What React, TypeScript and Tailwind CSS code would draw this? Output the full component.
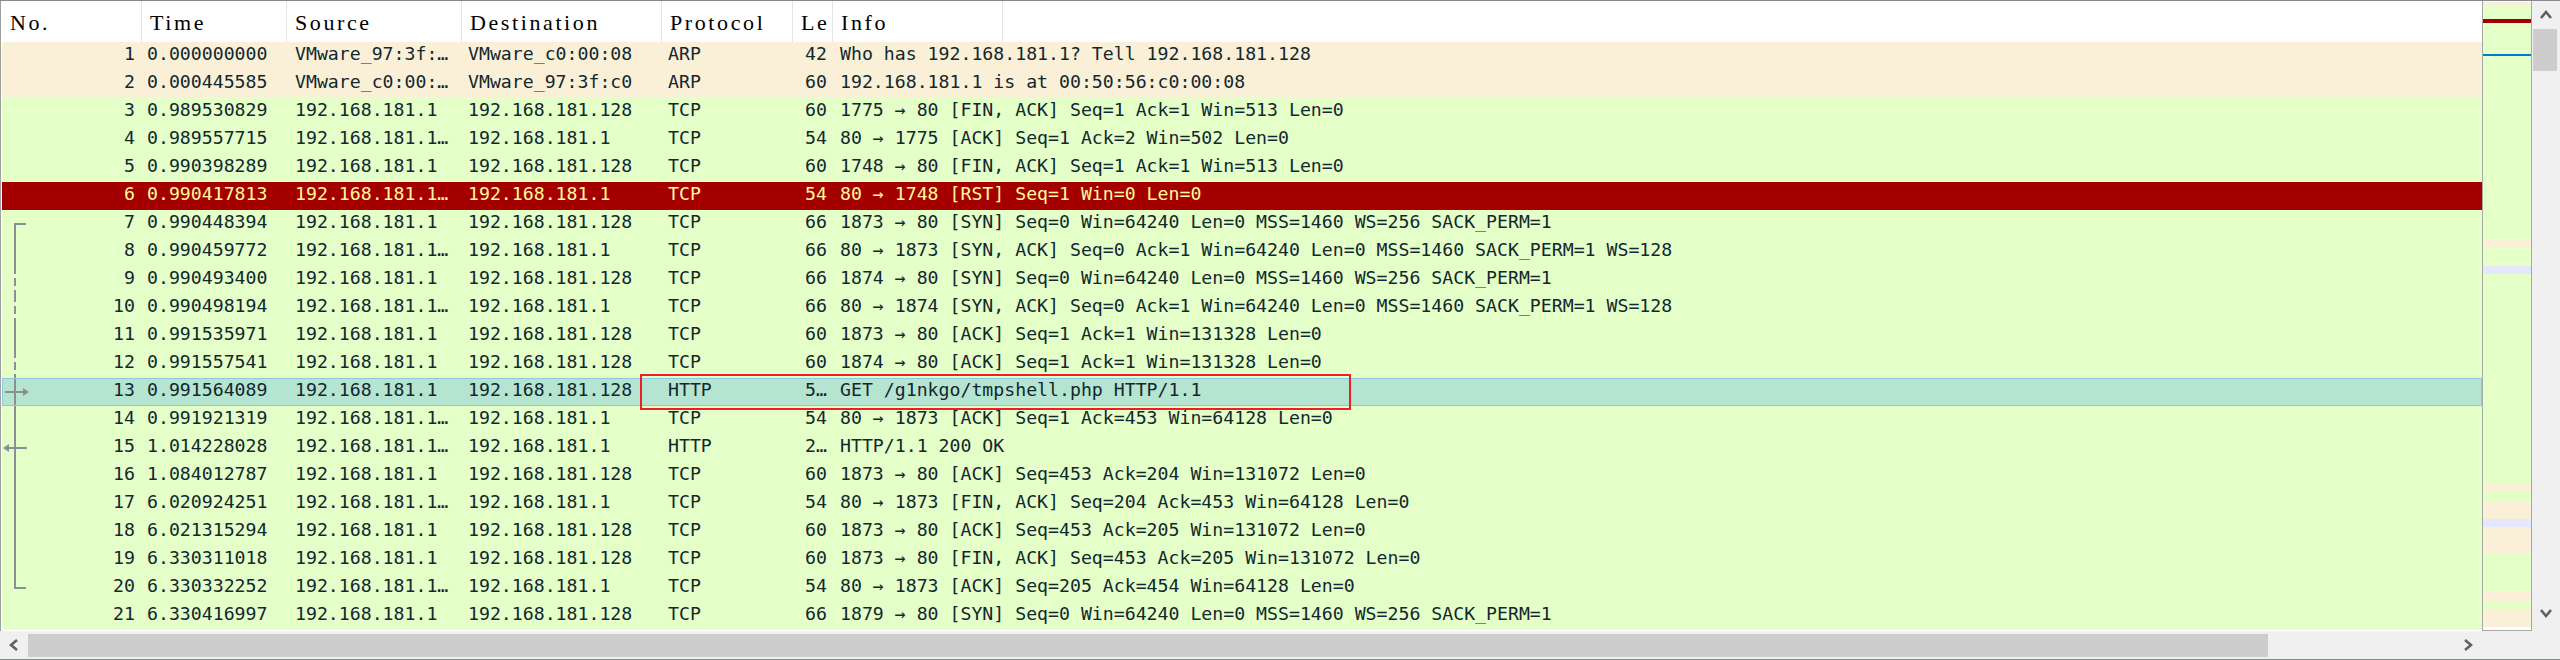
import React from 'react';

type Kind = 'arp' | 'tcp' | 'rst' | 'sel';
type Tree = 'none' | 'first' | 'solid' | 'dash' | 'last' | 'req' | 'resp';
interface Row {
  no: number;
  time: string;
  src: string;
  dst: string;
  proto: string;
  len: string;
  info: string;
  kind: Kind;
  tree: Tree;
}

const A = '192.168.181.1';
const B = '192.168.181.128';
const S = '192.168.181.1…';

const rows: Row[] = [
  { no: 1, time: '0.000000000', src: 'VMware_97:3f:…', dst: 'VMware_c0:00:08', proto: 'ARP', len: '42', info: 'Who has 192.168.181.1? Tell 192.168.181.128', kind: 'arp', tree: 'none' },
  { no: 2, time: '0.000445585', src: 'VMware_c0:00:…', dst: 'VMware_97:3f:c0', proto: 'ARP', len: '60', info: '192.168.181.1 is at 00:50:56:c0:00:08', kind: 'arp', tree: 'none' },
  { no: 3, time: '0.989530829', src: A, dst: B, proto: 'TCP', len: '60', info: '1775 → 80 [FIN, ACK] Seq=1 Ack=1 Win=513 Len=0', kind: 'tcp', tree: 'none' },
  { no: 4, time: '0.989557715', src: S, dst: A, proto: 'TCP', len: '54', info: '80 → 1775 [ACK] Seq=1 Ack=2 Win=502 Len=0', kind: 'tcp', tree: 'none' },
  { no: 5, time: '0.990398289', src: A, dst: B, proto: 'TCP', len: '60', info: '1748 → 80 [FIN, ACK] Seq=1 Ack=1 Win=513 Len=0', kind: 'tcp', tree: 'none' },
  { no: 6, time: '0.990417813', src: S, dst: A, proto: 'TCP', len: '54', info: '80 → 1748 [RST] Seq=1 Win=0 Len=0', kind: 'rst', tree: 'none' },
  { no: 7, time: '0.990448394', src: A, dst: B, proto: 'TCP', len: '66', info: '1873 → 80 [SYN] Seq=0 Win=64240 Len=0 MSS=1460 WS=256 SACK_PERM=1', kind: 'tcp', tree: 'first' },
  { no: 8, time: '0.990459772', src: S, dst: A, proto: 'TCP', len: '66', info: '80 → 1873 [SYN, ACK] Seq=0 Ack=1 Win=64240 Len=0 MSS=1460 SACK_PERM=1 WS=128', kind: 'tcp', tree: 'solid' },
  { no: 9, time: '0.990493400', src: A, dst: B, proto: 'TCP', len: '66', info: '1874 → 80 [SYN] Seq=0 Win=64240 Len=0 MSS=1460 WS=256 SACK_PERM=1', kind: 'tcp', tree: 'dash' },
  { no: 10, time: '0.990498194', src: S, dst: A, proto: 'TCP', len: '66', info: '80 → 1874 [SYN, ACK] Seq=0 Ack=1 Win=64240 Len=0 MSS=1460 SACK_PERM=1 WS=128', kind: 'tcp', tree: 'dash' },
  { no: 11, time: '0.991535971', src: A, dst: B, proto: 'TCP', len: '60', info: '1873 → 80 [ACK] Seq=1 Ack=1 Win=131328 Len=0', kind: 'tcp', tree: 'solid' },
  { no: 12, time: '0.991557541', src: A, dst: B, proto: 'TCP', len: '60', info: '1874 → 80 [ACK] Seq=1 Ack=1 Win=131328 Len=0', kind: 'tcp', tree: 'dash' },
  { no: 13, time: '0.991564089', src: A, dst: B, proto: 'HTTP', len: '5…', info: 'GET /g1nkgo/tmpshell.php HTTP/1.1', kind: 'sel', tree: 'req' },
  { no: 14, time: '0.991921319', src: S, dst: A, proto: 'TCP', len: '54', info: '80 → 1873 [ACK] Seq=1 Ack=453 Win=64128 Len=0', kind: 'tcp', tree: 'solid' },
  { no: 15, time: '1.014228028', src: S, dst: A, proto: 'HTTP', len: '2…', info: 'HTTP/1.1 200 OK', kind: 'tcp', tree: 'resp' },
  { no: 16, time: '1.084012787', src: A, dst: B, proto: 'TCP', len: '60', info: '1873 → 80 [ACK] Seq=453 Ack=204 Win=131072 Len=0', kind: 'tcp', tree: 'solid' },
  { no: 17, time: '6.020924251', src: S, dst: A, proto: 'TCP', len: '54', info: '80 → 1873 [FIN, ACK] Seq=204 Ack=453 Win=64128 Len=0', kind: 'tcp', tree: 'solid' },
  { no: 18, time: '6.021315294', src: A, dst: B, proto: 'TCP', len: '60', info: '1873 → 80 [ACK] Seq=453 Ack=205 Win=131072 Len=0', kind: 'tcp', tree: 'solid' },
  { no: 19, time: '6.330311018', src: A, dst: B, proto: 'TCP', len: '60', info: '1873 → 80 [FIN, ACK] Seq=453 Ack=205 Win=131072 Len=0', kind: 'tcp', tree: 'solid' },
  { no: 20, time: '6.330332252', src: S, dst: A, proto: 'TCP', len: '54', info: '80 → 1873 [ACK] Seq=205 Ack=454 Win=64128 Len=0', kind: 'tcp', tree: 'last' },
  { no: 21, time: '6.330416997', src: A, dst: B, proto: 'TCP', len: '66', info: '1879 → 80 [SYN] Seq=0 Win=64240 Len=0 MSS=1460 WS=256 SACK_PERM=1', kind: 'tcp', tree: 'none' },
];

const kindClass: Record<Kind, string> = {
  arp: 'bg-[#faf0d7] text-[#12272e]',
  tcp: 'bg-[#e4ffc7] text-[#12272e]',
  rst: 'bg-[#a40000] text-[#fffc9c]',
  sel: 'bg-[#b5e4d1] text-[#12272e] outline-1 -outline-offset-1 outline-[#8cc6e2]',
};

const G = '#8b9095';

function TreeMark({ t }: { t: Tree }) {
  return (
    <svg width="30" height="28" viewBox="0 0 30 28" className="shrink-0">
      {t === 'first' && (
        <>
          <rect x="12" y="13" width="12" height="2" fill={G} />
          <rect x="12" y="13" width="2" height="15" fill={G} />
        </>
      )}
      {t === 'last' && (
        <>
          <rect x="12" y="0" width="2" height="15" fill={G} />
          <rect x="12" y="13" width="12" height="2" fill={G} />
        </>
      )}
      {t === 'solid' && <rect x="12" y="0" width="2" height="28" fill={G} />}
      {t === 'dash' && (
        <line x1="13" y1="0" x2="13" y2="28" stroke={G} strokeWidth="2" strokeDasharray="8 4" />
      )}
      {t === 'req' && (
        <>
          <rect x="12" y="0" width="2" height="28" fill={G} />
          <rect x="3" y="13" width="20" height="2" fill={G} />
          <polygon points="27,14 21,10 21,18" fill={G} />
        </>
      )}
      {t === 'resp' && (
        <>
          <rect x="12" y="0" width="2" height="28" fill={G} />
          <rect x="5" y="13" width="20" height="2" fill={G} />
          <polygon points="1,14 7,10 7,18" fill={G} />
        </>
      )}
    </svg>
  );
}

const headers: { label: string; w: string }[] = [
  { label: 'No.', w: 'w-[140px]' },
  { label: 'Time', w: 'w-[145px]' },
  { label: 'Source', w: 'w-[175px]' },
  { label: 'Destination', w: 'w-[200px]' },
  { label: 'Protocol', w: 'w-[131px]' },
  { label: 'Le', w: 'w-[40px]' },
  { label: 'Info', w: 'w-[170px]' },
];

type Band = [number, string];
const bands: Band[] = [
  [1, '#ffffff'],
  [4, '#faf0d7'],
  [13, '#e4ffc7'],
  [4, '#a40000'],
  [31, '#e4ffc7'],
  [2, '#0078d7'],
  [184, '#e4ffc7'],
  [8, '#faf0d7'],
  [18, '#e4ffc7'],
  [8, '#e7e6ff'],
  [210, '#e4ffc7'],
  [8, '#faf0d7'],
  [9, '#e4ffc7'],
  [18, '#faf0d7'],
  [8, '#e7e6ff'],
  [26, '#faf0d7'],
  [39, '#e4ffc7'],
  [9, '#faf0d7'],
  [9, '#e4ffc7'],
  [17, '#faf0d7'],
];

function Chevron({ dir }: { dir: 'up' | 'down' | 'left' | 'right' }) {
  const pts =
    dir === 'up'
      ? '1,8 6,2 11,8'
      : dir === 'down'
      ? '1,2 6,8 11,2'
      : dir === 'left'
      ? '8,1 2,6 8,11'
      : '2,1 8,6 2,11';
  const w = dir === 'up' || dir === 'down' ? 12 : 10;
  const h = dir === 'up' || dir === 'down' ? 10 : 12;
  return (
    <svg width={w} height={h} viewBox={`0 0 ${w} ${h}`}>
      <polyline points={pts} fill="none" stroke="#606060" strokeWidth="2.6" strokeLinejoin="miter" />
    </svg>
  );
}

export default function App() {
  return (
    <div className="w-[2560px] h-[660px] bg-[#f0f0f0] flex flex-col border-t border-b border-[#868a8e] overflow-hidden">
      <div className="flex h-[630px]">
        {/* packet list */}
        <div className="relative w-[2482px] h-full bg-white border-l border-[#a0a0a0] pl-[1px] flex flex-col overflow-hidden">
          <div className="flex h-[41px] shrink-0 bg-white">
            {headers.map((h) => (
              <div
                key={h.label}
                className={`${h.w} shrink-0 h-full border-r border-[#e5e5e5] pl-[8px] pt-[10px] flex items-start`}
              >
                <span className="inline-block leading-[24px] text-[22px] tracking-[2.6px] text-black font-['Liberation_Serif',serif] whitespace-nowrap">
                  {h.label}
                </span>
              </div>
            ))}
          </div>
          <div className="flex flex-col font-['DejaVu_Sans_Mono',monospace] text-[18.2px] leading-[24px]">
            {rows.map((r) => (
              <div key={r.no} className={`flex h-[28px] shrink-0 whitespace-nowrap ${kindClass[r.kind]}`}>
                <div className="w-[140px] shrink-0 flex">
                  <TreeMark t={r.tree} />
                  <span className="flex-1 text-right pr-[7px]">{r.no}</span>
                </div>
                <div className="w-[145px] shrink-0 pl-[5px] overflow-hidden">{r.time}</div>
                <div className="w-[175px] shrink-0 pl-[8px] overflow-hidden">{r.src}</div>
                <div className="w-[200px] shrink-0 pl-[6px] overflow-hidden">{r.dst}</div>
                <div className="w-[131px] shrink-0 pl-[6px] overflow-hidden">{r.proto}</div>
                <div className="w-[40px] shrink-0 pr-[6px] text-right overflow-hidden">{r.len}</div>
                <div className="flex-1 pl-[7px] overflow-hidden">{r.info}</div>
              </div>
            ))}
          </div>
          {/* red annotation box */}
          <div className="absolute left-[639px] top-[373px] w-[711px] h-[36px] border-2 border-[#e8202a] pointer-events-none" />
        </div>
        {/* minimap */}
        <div className="w-[50px] h-full flex flex-col bg-white border-l border-r border-b border-[#a8a8a8]">
          {bands.map(([h, c], i) => (
            <div key={i} className="w-full shrink-0" style={{ height: h, backgroundColor: c }} />
          ))}
        </div>
        {/* vertical scrollbar */}
        <div className="w-[28px] h-full flex flex-col bg-[#f0f0f0]">
          <div className="h-[28px] flex items-center justify-center">
            <Chevron dir="up" />
          </div>
          <div className="ml-[1px] w-[24px] h-[42px] bg-[#cdcdcd]" />
          <div className="flex-1" />
          <div className="h-[28px] flex items-center justify-center pb-[8px]">
            <Chevron dir="down" />
          </div>
        </div>
      </div>
      {/* horizontal scrollbar */}
      <div className="flex flex-1">
        <div className="w-[2482px] flex items-center bg-[#f0f0f0]">
          <div className="w-[28px] flex items-center justify-center">
            <Chevron dir="left" />
          </div>
          <div className="w-[2240px] h-[23px] bg-[#cdcdcd]" />
          <div className="flex-1" />
          <div className="w-[28px] flex items-center justify-center">
            <Chevron dir="right" />
          </div>
        </div>
        <div className="flex-1 bg-[#f0f0f0]" />
      </div>
    </div>
  );
}
